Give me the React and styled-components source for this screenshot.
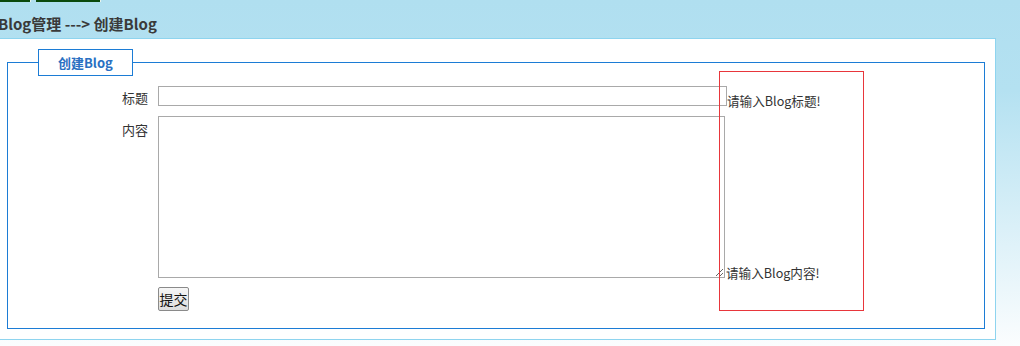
import React from "react";
import styled, { createGlobalStyle } from "styled-components";

const Global = createGlobalStyle`
  html, body { margin: 0; padding: 0; }
  html { min-height: 346px; background: linear-gradient(to bottom, #b0dff0 0px, #b4e1f1 90px, #fbfdfe 346px); }
  body { min-height: 346px; font-family: "Noto Sans CJK SC", "Noto Sans", sans-serif; color: #333; overflow: hidden; }
`;

const TopBar = styled.div`
  display: flex;
  gap: 5px;
  height: 2px;
`;

const Tab = styled.div`
  width: ${(p) => p.$w}px;
  height: 2px;
  background: #0b4a0d;
  border-right: 1px solid #e8f4ea;
`;

const Heading = styled.h2`
  margin: 0 0 0 -2px;
  height: 36px;
  line-height: 43px;
  font-size: 15px;
  font-weight: bold;
  color: #3a3a3a;
  white-space: nowrap;
`;

const Panel = styled.div`
  margin-left: -1px;
  width: 995px;
  height: 300px;
  background: #fff;
  border: 1px solid #8ed4ef;
  display: flow-root;
`;

const Fieldset = styled.fieldset`
  position: relative;
  margin: 10px 10px 10px 7px;
  padding: 0;
  border: 1px solid #1c7cd5;
  height: 280px;
  box-sizing: border-box;
`;

const Legend = styled.legend`
  margin-left: 30px;
  padding: 0 19px;
  height: 27px;
  box-sizing: border-box;
  line-height: 25px;
  border: 1px solid #1c7cd5;
  font-size: 13px;
  font-weight: bold;
  color: #2a70c2;
`;

const Form = styled.div`
  display: flex;
  flex-direction: column;
  gap: 10px;
  padding-top: 10px;
`;

const Row = styled.div`
  display: flex;
  align-items: flex-start;
  gap: 10px;
`;

const Label = styled.label`
  width: 140px;
  text-align: right;
  font-size: 13px;
  line-height: 16px;
  color: #333;
  padding-top: ${(p) => p.$top}px;
`;

const Field = styled.div`
  display: flex;
  align-items: flex-end;
`;

const TextInput = styled.input`
  width: 569px;
  height: 20px;
  box-sizing: border-box;
  margin: 0;
  border: 1px solid #a9a9a9;
  padding: 1px 2px;
`;

const TextArea = styled.textarea`
  display: block;
  width: 567px;
  height: 162px;
  box-sizing: border-box;
  margin: 0;
  border: 1px solid #a9a9a9;
  padding: 2px;
`;

const Message = styled.span`
  font-size: 12.6px;
  line-height: 16px;
  color: #333;
  white-space: nowrap;
  margin-bottom: ${(p) => p.$mb}px;
  margin-left: ${(p) => p.$ml}px;
`;

const SubmitRow = styled.div`
  padding-left: 150px;
  margin-top: -1px;
`;

const Button = styled.button`
  display: block;
  height: 24px;
  width: 31px;
  padding: 0;
  font-family: "Noto Sans CJK SC", sans-serif;
  font-size: 14px;
  line-height: 20px;
  color: #111;
  background: linear-gradient(#f6f6f6, #dddddd);
  border: 1px solid #8a8a8a;
  border-radius: 2px;
`;

const ErrorBox = styled.div`
  position: absolute;
  left: 711px;
  top: -5px;
  width: 145px;
  height: 240px;
  box-sizing: border-box;
  border: 1px solid #e8363b;
  pointer-events: none;
`;

export default function App() {
  return (
    <>
      <Global />
      <TopBar>
        <Tab $w={30} />
        <Tab $w={64} />
      </TopBar>
      <Heading>Blog管理 ---&gt; 创建Blog</Heading>
      <Panel>
        <Fieldset>
          <Legend>创建Blog</Legend>
          <Form>
            <Row>
              <Label $top={4}>标题</Label>
              <Field>
                <TextInput type="text" />
                <Message $mb={-3} $ml={0}>请输入Blog标题!</Message>
              </Field>
            </Row>
            <Row>
              <Label $top={6}>内容</Label>
              <Field>
                <TextArea />
                <Message $mb={-3} $ml={1}>请输入Blog内容!</Message>
              </Field>
            </Row>
            <SubmitRow>
              <Button>提交</Button>
            </SubmitRow>
          </Form>
          <ErrorBox />
        </Fieldset>
      </Panel>
    </>
  );
}
